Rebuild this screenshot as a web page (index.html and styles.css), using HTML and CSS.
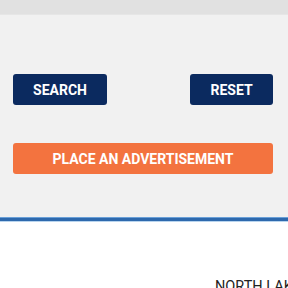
FILE: index.html
```html
<!DOCTYPE html>
<html>
<head>
<meta charset="utf-8">
<link rel="stylesheet" href="styles.css">
</head>
<body>
<div class="topbar"></div>
<section class="filters">
  <div class="actions">
    <button class="btn btn-navy btn-search">SEARCH</button>
    <button class="btn btn-navy btn-reset">RESET</button>
  </div>
  <button class="btn btn-orange">PLACE AN ADVERTISEMENT</button>
</section>
<div class="divider"></div>
<main class="content">
  <div class="label">NORTH LAKE</div>
</main>
</body>
</html>
```
FILE: styles.css
```css
html, body {
  margin: 0;
  padding: 0;
}
body {
  width: 288px;
  height: 288px;
  overflow: hidden;
  background: #ffffff;
  font-family: Roboto, "Liberation Sans", sans-serif;
}
.topbar {
  height: 14px;
  background: #e1e1e1;
  border-bottom: 1px solid #e6e6e6;
}
.filters {
  background: #f1f1f1;
  padding: 59px 15px 43px 13px;
  display: flex;
  flex-direction: column;
}
.actions {
  display: flex;
  justify-content: space-between;
  margin-bottom: 38px;
}
.btn {
  border: none;
  border-radius: 3px;
  height: 31px;
  color: #ffffff;
  font-family: Roboto, "Liberation Sans", sans-serif;
  font-weight: 700;
  font-size: 14px;
  padding: 0;
  display: flex;
  align-items: center;
  justify-content: center;
}
.btn-navy {
  background: #0b2a5f;
}
.btn-search {
  width: 94px;
}
.btn-reset {
  width: 83px;
}
.btn-orange {
  background: #f3733f;
  width: 260px;
}
.divider {
  height: 5px;
  background: #2e69ad;
  border-top: 1px solid #6aa0d8;
  border-bottom: 1px solid #b8d4ee;
  box-sizing: border-box;
}
.content {
  background: #ffffff;
  padding-top: 57px;
  padding-left: 215px;
}
.label {
  white-space: nowrap;
  font-size: 14.5px;
  color: #222222;
  line-height: 16px;
}
```
